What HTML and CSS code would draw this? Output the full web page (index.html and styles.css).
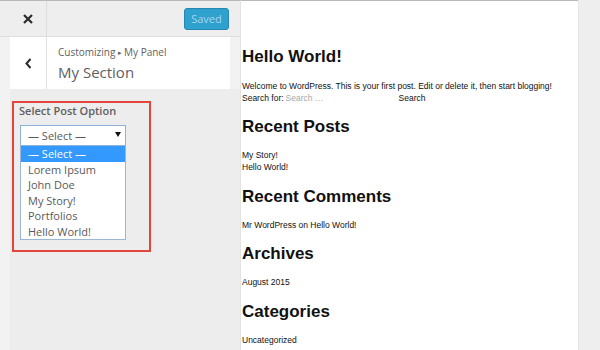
FILE: index.html
```html
<!DOCTYPE html>
<html>
<head>
<meta charset="utf-8">
<link rel="stylesheet" href="styles.css">
</head>
<body>
<div class="app">
  <aside class="sidebar">
    <div class="topbar">
      <span class="close"><svg width="10" height="10" viewBox="0 0 10 10"><path d="M1 1L9 9M9 1L1 9" stroke="#2b2b2b" stroke-width="2.2" fill="none"/></svg></span>
      <button class="saved">Saved</button>
    </div>
    <div class="section-head">
      <span class="back"><svg width="7" height="11" viewBox="0 0 7 11"><path d="M5.5 1L1.5 5.5L5.5 10" stroke="#2b2b2b" stroke-width="2" fill="none"/></svg></span>
      <div class="titles">
        <div class="crumb">Customizing <span class="sep">▸</span> My Panel</div>
        <div class="title">My Section</div>
      </div>
    </div>
    <div class="controls">
      <div class="highlight-box">
        <div class="label">Select Post Option</div>
        <div class="select"><span>— Select —</span><span class="caret"></span></div>
        <ul class="options">
          <li class="active">— Select —</li>
          <li>Lorem Ipsum</li>
          <li>John Doe</li>
          <li>My Story!</li>
          <li>Portfolios</li>
          <li>Hello World!</li>
        </ul>
      </div>
    </div>
  </aside>
  <main class="preview">
    <h1>Hello World!</h1>
    <p>Welcome to WordPress. This is your first post. Edit or delete it, then start blogging!</p>
    <div class="search"><span>Search for:</span><span class="search-input">Search …</span><span class="search-btn">Search</span></div>
    <h2>Recent Posts</h2>
    <ul class="list"><li>My Story!</li><li>Hello World!</li></ul>
    <h2>Recent Comments</h2>
    <ul class="list"><li>Mr WordPress on Hello World!</li></ul>
    <h2>Archives</h2>
    <ul class="list"><li>August 2015</li></ul>
    <h2>Categories</h2>
    <ul class="list"><li>Uncategorized</li></ul>
  </main>
  <div class="gutter"></div>
</div>
</body>
</html>
```

FILE: styles.css
```css
* { box-sizing: border-box; }
html, body { margin: 0; padding: 0; }
body {
  width: 600px;
  height: 350px;
  overflow: hidden;
  background: #eeeeee;
  font-family: "Open Sans", "DejaVu Sans", sans-serif;
}
.app {
  display: flex;
  height: 350px;
}
.sidebar {
  width: 240px;
  flex: none;
  display: flex;
  flex-direction: column;
  background: #f2f2f2;
  border-top: 1px solid #b9b9b9;
}
.topbar {
  height: 36px;
  display: flex;
  align-items: center;
  justify-content: space-between;
  background: #eeeeee;
  border-bottom: 1px solid #dddddd;
}
.close {
  width: 47px;
  height: 35px;
  padding-left: 10px;
  display: flex;
  align-items: center;
  justify-content: center;
  border-right: 1px solid #dddddd;
}
.saved {
  margin-right: 11px;
  width: 45px;
  height: 22px;
  padding: 0;
  border: 1px solid #2786b2;
  border-radius: 3px;
  background: #2ea1cf;
  color: #a6d6ec;
  font-family: "Open Sans", sans-serif;
  font-size: 11px;
  line-height: 20px;
}
.section-head {
  margin: 0 10px;
  height: 52px;
  background: #ffffff;
  display: flex;
}
.back {
  width: 37px;
  display: flex;
  align-items: center;
  justify-content: center;
  border-right: 1px solid #e2e2e2;
  padding-top: 1px;
}
.titles {
  padding: 8px 0 0 11px;
  color: #5f5f5f;
}
.crumb {
  font-size: 10px;
  line-height: 14px;
}
.sep { font-size: 7px; vertical-align: 1px; }
.title {
  font-size: 15px;
  line-height: 24px;
}
.controls {
  flex: 1;
  margin-left: 10px;
  background: #ededed;
  padding: 12px 0 0 2px;
}
.highlight-box {
  width: 139px;
  height: 151px;
  border: 2px solid #e2463c;
  padding: 0 0 0 5px;
}
.label {
  font-size: 11px;
  font-weight: 600;
  line-height: 16px;
  color: #606060;
}
.select {
  margin: 6px 0 0 1px;
  width: 106px;
  height: 21px;
  border: 1px solid #8db3da;
  background: #ffffff;
  display: flex;
  align-items: center;
  justify-content: space-between;
  padding: 0 4px 0 7px;
  font-size: 11px;
  color: #5a5a5a;
}
.caret {
  width: 0;
  height: 0;
  border-left: 3px solid transparent;
  border-right: 3px solid transparent;
  border-top: 5px solid #111111;
  margin-top: -2px;
}
.options {
  list-style: none;
  margin: 0 0 0 1px;
  padding: 0;
  width: 106px;
  border: 1px solid #9cb7d6;
  border-top: none;
  background: #ffffff;
}
.options li {
  height: 15.5px;
  line-height: 15.5px;
  padding-left: 7px;
  font-size: 11px;
  color: #5a5a5a;
}
.options li.active {
  background: #3399ff;
  color: #ffffff;
}
.preview {
  width: 338px;
  flex: none;
  background: #ffffff;
  border-top: 1px solid #b9b9b9;
  border-left: 1px solid #e3e3e3;
  padding-left: 1px;
  font-family: "Liberation Sans", Arial, sans-serif;
  color: #111111;
}
.preview h1, .preview h2 {
  font-size: 17px;
  line-height: 20px;
  font-weight: bold;
  margin: 13.4px 0 12px;
}
.preview h1 { margin-top: 46px; margin-bottom: 13px; }
.preview p {
  margin: 0;
  font-size: 8.5px;
  line-height: 12px;
}
.search {
  display: flex;
  font-size: 8.5px;
  line-height: 12px;
}
.search-input {
  width: 113px;
  margin-left: 2px;
  color: #a8a8a8;
}
.search-btn { color: #111111; }
.list {
  list-style: none;
  margin: 0;
  padding: 0;
  font-size: 8.5px;
  line-height: 12px;
}
.gutter {
  flex: 1;
  background: #eeeeee;
  border-left: 1px solid #e6e6e6;
}
```
